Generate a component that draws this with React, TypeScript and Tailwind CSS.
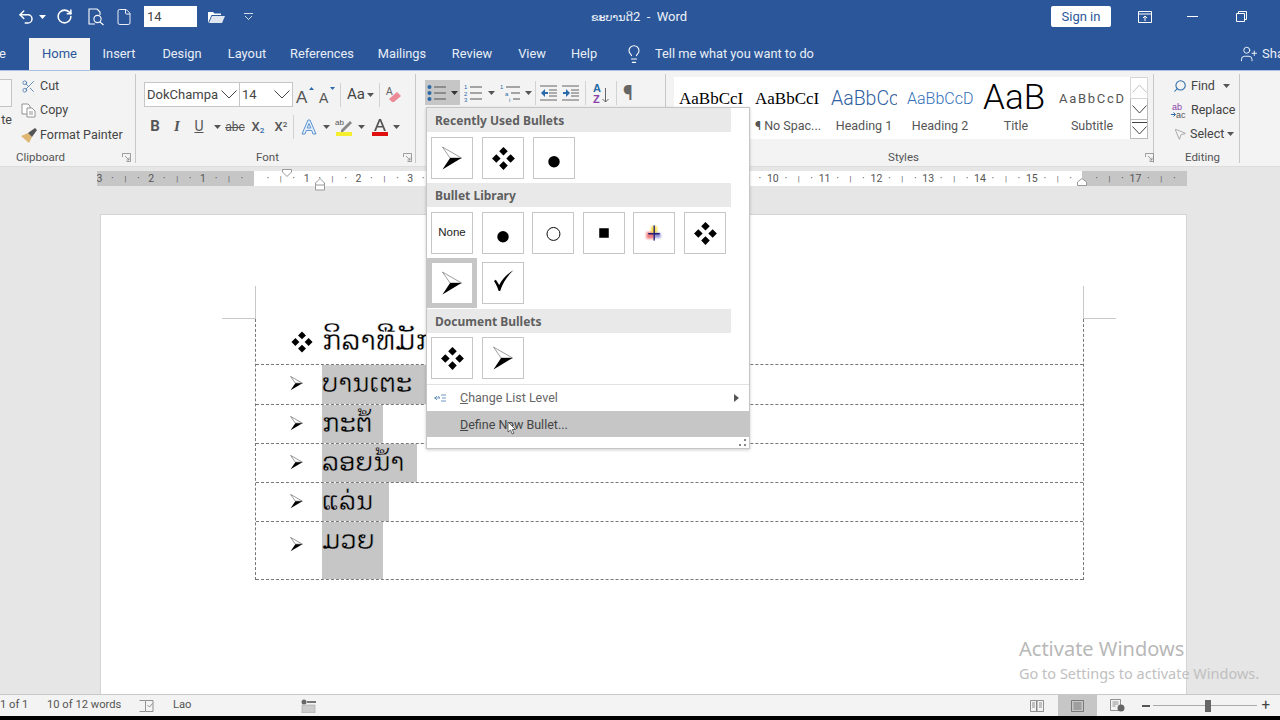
import React from "react";
import { Undo2, RotateCw, File, Scissors, Lightbulb, UserPlus, Search, MousePointer2 } from "lucide-react";

const Arrow = ({ s = 42, crop = false }: { s?: number; crop?: boolean }) => (
  <svg width={s} height={crop ? s * 1.15 : s} viewBox={crop ? "10 9 22 25" : "0 0 42 42"}>
    <path d="M11 9.500 L31 21 L19 21 Z" fill="#fff" stroke="#555" strokeWidth={crop ? 1 : 0.6} />
    <path d="M11 33 L19 21 L31 21 Z" fill="#000" />
  </svg>
);
const Diamonds = ({ s = 42, crop = false }: { s?: number; crop?: boolean }) => (
  <svg width={s} height={s} viewBox={crop ? "9 9 25 25" : "0 0 42 42"} fill="#000">
    <path d="M21.500 9.500l4.500 4.500-4.500 4.500-4.500-4.500z" />
    <path d="M14 17l4.500 4.500-4.500 4.500-4.500-4.500z" />
    <path d="M29 17l4.500 4.500-4.500 4.500-4.500-4.500z" />
    <path d="M21.500 24.500l4.500 4.500-4.500 4.500-4.500-4.500z" />
  </svg>
);
const Dot = () => (
  <svg width="42" height="42" viewBox="0 0 42 42"><circle cx="21" cy="25" r="6" fill="#000" /></svg>
);
const Ring = () => (
  <svg width="42" height="42" viewBox="0 0 42 42"><circle cx="21.500" cy="22" r="6.800" fill="#fff" stroke="#000" strokeWidth="1" /></svg>
);
const Square = () => (
  <svg width="42" height="42" viewBox="0 0 42 42"><rect x="16" y="16" width="10" height="10" fill="#000" /></svg>
);
const Plus4 = () => (
  <svg width="42" height="42" viewBox="0 0 42 42">
    <g className="blur-[1px]">
      <rect x="13" y="20" width="8" height="7" fill="#f07a7a" />
      <rect x="18" y="14" width="6" height="7" fill="#f7d83a" />
      <rect x="21" y="21" width="7" height="5" fill="#8f8fd8" />
    </g>
    <rect x="20.500" y="13" width="1.400" height="16" fill="#20207a" />
    <rect x="15" y="21" width="12" height="1.600" fill="#20207a" />
  </svg>
);
const Check = () => (
  <svg width="42" height="42" viewBox="0 0 42 42"><path d="M11.500 19L13.500 17.500 17 23C20.500 16 26 11 32 7.500 26 13 21 20 18 29.500H16.500C15 25 13.500 22 11.500 19z" fill="#000" /></svg>
);
const Caret = ({ c = "#555" }: { c?: string }) => (
  <svg width="7" height="4" viewBox="0 0 7 4"><path d="M0 0h7L3.500 4z" fill={c} /></svg>
);
const WideChevron = () => (
  <svg width="16" height="9" viewBox="0 0 16 9" fill="none" stroke="#444" strokeWidth="1"><path d="M.5.500L8 8l7.500-7.500" /></svg>
);
const ScrollChevron = ({ c = "#444", up = false }: { c?: string; up?: boolean }) => (
  <svg width="15" height="9" viewBox="0 0 15 9" fill="none" stroke={c} strokeWidth="1"><path d={up ? "M.5 8.500L7.500 1l7 7.500" : "M.5.500L7.500 8l7-7.500"} /></svg>
);

const BulletsIcon = () => (
  <svg width="20" height="18" viewBox="0 0 20 18">
    <g fill="#2b6aa8"><circle cx="2.500" cy="3" r="2" /><circle cx="2.500" cy="9" r="2" /><circle cx="2.500" cy="15" r="2" /></g>
    <g stroke="#555" strokeWidth="1"><path d="M7 3h12M7 9h12M7 15h12" /></g>
  </svg>
);
const NumIcon = () => (
  <svg width="18" height="20" viewBox="0 0 18 20">
    <g fontSize="6" fill="#2b6aa8" fontFamily="Liberation Sans"><text x="0" y="6">1</text><text x="0" y="12.500">2</text><text x="0" y="19">3</text></g>
    <g stroke="#555" strokeWidth="1"><path d="M6 4h12M6 10h12M6 16h12" /></g>
  </svg>
);
const MultiIcon = () => (
  <svg width="20" height="20" viewBox="0 0 20 20">
    <g fontSize="6" fill="#2b6aa8" fontFamily="Liberation Sans"><text x="0" y="6">1</text><text x="5" y="12.500">a</text><text x="9" y="19">i</text></g>
    <g stroke="#555" strokeWidth="1"><path d="M6 4h14M11 10h9M13 16h7" /></g>
  </svg>
);
const IndentIcon = ({ flip = false }: { flip?: boolean }) => (
  <svg width="18" height="18" viewBox="0 0 18 18">
    <g stroke="#666" strokeWidth="1"><path d="M0 2h17M9 6h8M9 9h8M9 12h8M0 16h17" /></g>
    <path d={flip ? "M1 8h3V5l4 4-4 4v-3H1z" : "M8 8H5V5L1 9l4 4v-3h3z"} fill="#2b6aa8" />
  </svg>
);
const SortIcon = () => (
  <svg width="17" height="22" viewBox="0 0 17 22">
    <text x="0" y="10" fontSize="11" fontWeight="700" fill="#2b6aa8" fontFamily="Liberation Sans">A</text>
    <text x="0" y="21" fontSize="11" fontWeight="700" fill="#8a3fa8" fontFamily="Liberation Sans">Z</text>
    <path d="M12.500 6v14M9.500 17l3 3 3-3" stroke="#666" fill="none" />
  </svg>
);
const CopyIcon = () => (
  <svg width="15" height="15" viewBox="0 0 15 15" fill="#fff" stroke="#888" strokeWidth="0.9">
    <path d="M1 1h6l2 2v8H1z" /><path d="M6 5h5l3 3v6H6z" /><path d="M8 9h4M8 11h4" />
  </svg>
);
const PainterIcon = () => (
  <svg width="17" height="15" viewBox="0 0 17 15">
    <path d="M0 8l7-3 4 4-3 6z" fill="#e0b673" />
    <path d="M7 5l4 4 5-7-2-2z" fill="#555" />
  </svg>
);
const PreviewIcon = () => (
  <svg width="18" height="18" viewBox="0 0 18 18" fill="none" stroke="#fff" strokeWidth="1.100">
    <path d="M10 1H2v15h6M10 1l3 3v3" /><circle cx="10.500" cy="11" r="3.600" /><path d="M13 14l3.500 3" />
  </svg>
);
const FolderIcon = () => (
  <svg width="17" height="14" viewBox="0 0 17 14">
    <path d="M0 2h5l1.500 1.500H13V5H3.500L0 13z" fill="#fff" /><path d="M4 6h13l-3 7H1z" fill="#fff" opacity=".85" />
  </svg>
);
const QatCaret = () => (
  <svg width="9" height="7" viewBox="0 0 9 7" fill="none" stroke="#fff" strokeWidth="0.8"><path d="M0 .5h9M1 3l3.500 3.500L8 3" /></svg>
);
const Launcher = () => (
  <svg width="9" height="9" viewBox="0 0 9 9" fill="none" stroke="#888" strokeWidth="0.8"><path d="M.5 4V.5H8.500V8.500H4.500M3 3l4 4M7 4.500V7H4.500" /></svg>
);
const GradA = () => (
  <svg width="16" height="16" viewBox="0 0 16 16"><path d="M1 15L7 1h2l6 14h-3l-1.300-3.500H5.300L4 15zM6.200 9h3.600L8 4.500z" fill="#e3eef9" stroke="#5b93d3" strokeWidth="1" /></svg>
);
const Highlight = () => (
  <svg width="18" height="18" viewBox="0 0 18 18">
    <text x="0" y="7" fontSize="8" fill="#555" fontFamily="Liberation Sans">ab</text>
    <path d="M6 12l9-9 2 2-9 9H6z" fill="#888" />
    <rect x="1" y="14" width="16" height="4" fill="#f5ee2f" />
  </svg>
);
const ColorA = () => (
  <svg width="18" height="18" viewBox="0 0 18 18">
    <path d="M3 13L8 1h2l5 12h-2l-1.300-3.500H6.300L5 13zM7 8h4L9 3z" fill="#555" />
    <rect x="1" y="14" width="16" height="4" fill="#e01010" />
  </svg>
);
const GrowA = ({ s, up }: { s: number; up: boolean }) => (
  <svg width="20" height="20" viewBox="0 0 20 20">
    <text x={up ? 1 : 3} y="18" fontSize={s} fill="#555" fontFamily="Liberation Sans">A</text>
    <path d={up ? "M14 5l2.500-3 2.500 3z" : "M14 2h5l-2.500 3z"} fill="#2b6aa8" />
  </svg>
);
const Eraser = () => (
  <svg width="18" height="18" viewBox="0 0 18 18">
    <text x="1" y="9" fontSize="10" fill="#666" fontFamily="Liberation Sans">A</text>
    <path d="M4 13l8-7 4 4-7 6H7z" fill="#ec8a97" />
  </svg>
);
const ReplaceIcon = () => (
  <svg width="17" height="17" viewBox="0 0 17 17">
    <text x="1" y="7.500" fontSize="9" fill="#8a3fa8" fontFamily="Liberation Sans">ab</text>
    <text x="5" y="15.500" fontSize="9" fill="#555" fontFamily="Liberation Sans">ac</text>
    <path d="M0 12.500h4M2.500 10.500l2 2-2 2" stroke="#2b6aa8" fill="none" />
  </svg>
);

const Sep = () => <div className="w-px h-[24px] bg-[#d2d2d2]" />;
const GroupLabel = ({ children, launcher }: { children: React.ReactNode; launcher?: string }) => (
  <div className="relative h-[18px] shrink-0 flex items-center justify-center text-[11.500px] text-[#555]">
    {children}
    {launcher && <span className={`absolute top-[4px] ${launcher}`}><Launcher /></span>}
  </div>
);

const Tab = ({ w, label }: { w: string; label: string }) => (
  <div className={`${w} text-center text-[12.800px] text-[#e9eef6]`}>{label}</div>
);

const RulerCells = () => {
  const nums = ["3", "2", "1", "", "1", "2", "3", "4", "5", "6", "7", "8", "9", "10", "11", "12", "13", "14", "15", "", "17"];
  return (
    <div className="flex -ml-[4px]">
      {nums.map((n, i) => (
        <div key={i} className="w-[51.800px] shrink-0 flex text-[10.500px] text-[#555] leading-[15px]">
          <span className="w-[13px] text-center">{n}</span>
          <span className="w-[13px] text-center">·</span>
          <span className="w-[13px] text-center text-[8px]">|</span>
          <span className="w-[13px] text-center">·</span>
        </div>
      ))}
    </div>
  );
};

const Cell = ({ children }: { children: React.ReactNode }) => (
  <div className="w-[42px] h-[42px] border border-[#c6c6c6] bg-white flex items-center justify-center shrink-0 overflow-hidden">{children}</div>
);
const MenuHead = ({ children }: { children: React.ReactNode }) => (
  <div className="h-[24px] w-[304px] bg-[#e9e9e9] pl-[8px] pt-[1px] flex items-center text-[12px] font-bold text-[#5f5f5f] font-['Noto_Sans']">{children}</div>
);

const Row = ({ h, text, sel, pt }: { h: string; text: string; sel: string; pt: string }) => (
  <div className={`${h} flex border-b border-dashed border-[#777]`}>
    <div className="w-[33px]" />
    <div className={`w-[15px] flex justify-center ${pt}`}>
      <span className="block"><Arrow s={13} crop /></span>
    </div>
    <div className="w-[18px]" />
    <div className={`${sel} bg-[#c6c6c6] whitespace-nowrap text-[26px] leading-[37px] text-black font-['DejaVu_Sans','Noto_Sans',sans-serif] [-webkit-text-stroke:0.5px_#c6c6c6]`}>{text}</div>
  </div>
);

const Style = ({ sample, label, cls }: { sample: string; label: string; cls: string }) => (
  <div className="w-[76px] h-[61px] shrink-0 flex flex-col items-center overflow-hidden">
    <div className={`h-[40px] w-[66px] pt-[3px] flex items-center justify-start whitespace-nowrap overflow-hidden ${cls}`}>{sample}</div>
    <div className="text-[12.500px] text-[#555] whitespace-nowrap">{label}</div>
  </div>
);

export default function App() {
  return (
    <div className="relative w-[1280px] h-[720px] overflow-hidden flex flex-col bg-[#e6e6e6] font-['Roboto','Noto_Sans',sans-serif]">
      {/* Title bar */}
      <div className="h-[38px] bg-[#2b579a] flex items-center shrink-0 text-white pb-[5px]">
        <div className="w-[17px]" />
        <Undo2 size={18} strokeWidth={2} />
        <div className="w-[4px]" />
        <Caret c="#fff" />
        <div className="w-[10px]" />
        <RotateCw size={17} strokeWidth={2.200} />
        <div className="w-[14px]" />
        <PreviewIcon />
        <div className="w-[10px]" />
        <File size={18} strokeWidth={1.200} />
        <div className="w-[11px]" />
        <div className="w-[53px] h-[21px] bg-white text-[#444] text-[13px] leading-[22px] pl-[3px]">14</div>
        <div className="w-[11px]" />
        <FolderIcon />
        <div className="w-[19px]" />
        <QatCaret />
        <div className="w-[338px] shrink-0" />
        <div className="text-[12.500px] whitespace-pre font-['DejaVu_Sans','Noto_Sans',sans-serif] w-[100px] text-[#eef2f8]">
          <span className="text-[11px]">ຂະບານດີ</span><span className="font-['Roboto'] text-[13px]">2  -  Word</span>
        </div>
        <div className="flex-1" />
        <div className="w-[60px] h-[21px] bg-white rounded-[2px] text-[#2b579a] text-[13px] text-center leading-[21px]">Sign in</div>
        <div className="w-[27px]" />
        <svg width="14" height="12" viewBox="0 0 14 12" fill="none" stroke="#fff"><path d="M.5.500h13v11H.5zM.5 3h13" /><path d="M7 10V5M5 7l2-2 2 2" /></svg>
        <div className="w-[35px]" />
        <div className="w-[11px] h-px bg-white" />
        <div className="w-[38px]" />
        <svg width="11" height="11" viewBox="0 0 11 11" fill="none" stroke="#fff"><path d="M.5 2.500h8v8h-8zM2.500 2.500v-2h8v8h-2" /></svg>
        <div className="w-[33px]" />
      </div>
      {/* Tabs */}
      <div className="h-[32px] bg-[#2b579a] flex items-center shrink-0 relative">
        <div className="w-[29px] text-[13px] text-[#e9eef6] shrink-0 overflow-hidden"><span className="block -ml-px">e</span></div>
        <div className="w-[61px] h-[32px] bg-[#f3f3f3] text-[13px] text-[#2b579a] text-center leading-[32px] shrink-0">Home</div>
        <Tab w="w-[58px]" label="Insert" />
        <Tab w="w-[68px]" label="Design" />
        <Tab w="w-[62px]" label="Layout" />
        <Tab w="w-[88px]" label="References" />
        <Tab w="w-[72px]" label="Mailings" />
        <Tab w="w-[68px]" label="Review" />
        <Tab w="w-[52px]" label="View" />
        <Tab w="w-[52px]" label="Help" />
        <Lightbulb size={20} strokeWidth={1.300} className="text-white ml-[14px]" />
        <div className="ml-[11px] text-[12.800px] text-[#e9eef6]">Tell me what you want to do</div>
        <div className="flex-1" />
        <UserPlus size={18} strokeWidth={1.200} className="text-white" />
        <div className="ml-[4px] w-[18px] overflow-hidden text-[13px] text-[#e9eef6]">Share</div>
      </div>
      <div className="h-px bg-[#a9c0e4] shrink-0" />
      {/* Ribbon */}
      <div className="h-[96px] bg-[#f3f3f3] flex shrink-0 border-b border-[#dcdcdc] text-[#444]">
        {/* Clipboard */}
        <div className="w-[136px] shrink-0 border-r border-[#c8c8c8] my-[3px] flex flex-col">
          <div className="h-[75px] shrink-0 flex">
            <div className="w-[21px] relative">
              <div className="w-[12px] h-[28px] mt-[5px] bg-[#f8f8f8] border border-l-0 border-[#c4c4c4]" />
              <div className="text-[12.500px] leading-[16px] mt-[5px] w-[12px] overflow-hidden text-right">te</div>
            </div>
            <div className="flex flex-col gap-[4.500px] pt-[2px] text-[12.500px]">
              <div className="flex items-center gap-[4px] h-[20px]"><Scissors size={15} strokeWidth={1.200} className="text-[#3e6ea8]" />Cut</div>
              <div className="flex items-center gap-[4px] h-[20px]"><CopyIcon />Copy</div>
              <div className="flex items-center gap-[2px] h-[20px]"><PainterIcon />Format Painter</div>
            </div>
          </div>
          <GroupLabel launcher="right-[4px]"><span className="mr-[54px]">Clipboard</span></GroupLabel>
        </div>
        {/* Font */}
        <div className="w-[280px] shrink-0 border-r border-[#c8c8c8] my-[3px] flex flex-col">
          <div className="h-[75px] shrink-0 pl-[8px] pt-[8px]">
            <div className="flex items-center h-[25px]">
              <div className="w-[96px] h-[25px] bg-white border border-[#c6c6c6] flex items-center justify-between pl-[2px] pr-[2px] text-[13px]">DokChampa<WideChevron /></div>
              <div className="w-[53px] h-[25px] bg-white border border-l-0 border-[#c6c6c6] flex items-center justify-between pl-[2px] pr-[2px] text-[13px]">14<WideChevron /></div>
              <div className="ml-[2px] w-[20px]"><GrowA s={17} up /></div>
              <div className="w-[22px] ml-[1px]"><GrowA s={14} up={false} /></div>
              <div className="ml-[2px]"><Sep /></div>
              <div className="ml-[6px] w-[28px] text-[15px] flex items-center gap-[2px]">Aa<Caret /></div>
              <div className="ml-[4px]"><Sep /></div>
              <div className="ml-[5px]"><Eraser /></div>
            </div>
            <div className="flex items-center h-[25px] mt-[7px] text-[#555]">
              <div className="w-[22px] text-center text-[15px] font-bold">B</div>
              <div className="w-[22px] text-center text-[15px] italic font-['Liberation_Serif'] font-bold">I</div>
              <div className="w-[22px] text-center text-[14px] underline">U</div>
              <div className="w-[14px] flex justify-center"><Caret /></div>
              <div className="w-[22px] text-center text-[12px] line-through">abc</div>
              <div className="w-[24px] text-center text-[13px] font-medium">X<sub className="text-[8px] text-[#2b6aa8]">2</sub></div>
              <div className="w-[22px] text-center text-[13px] font-medium">X<sup className="text-[8px]">2</sup></div>
              <div className="ml-[1px]"><Sep /></div>
              <div className="ml-[7px]"><GradA /></div>
              <div className="ml-[6px]"><Caret /></div>
              <div className="ml-[5px]"><Highlight /></div>
              <div className="ml-[5px]"><Caret /></div>
              <div className="ml-[6px]"><ColorA /></div>
              <div className="ml-[4px]"><Caret /></div>
            </div>
          </div>
          <GroupLabel launcher="right-[3px]"><span className="mr-[16px]">Font</span></GroupLabel>
        </div>
        {/* Paragraph */}
        <div className="w-[250px] shrink-0 border-r border-[#c8c8c8] my-[3px] flex flex-col">
          <div className="h-[73px] pl-[9px] pt-[6px]">
            <div className="flex items-center h-[25px]">
              <div className="w-[35px] h-[25px] bg-[#c6c6c6] flex items-center gap-[4px] pl-[2px]"><BulletsIcon /><Caret c="#333" /></div>
              <div className="ml-[4px] w-[33px] flex items-center gap-[6px]"><NumIcon /><Caret /></div>
              <div className="ml-[3px] w-[35px] flex items-center gap-[5px]"><MultiIcon /><Caret /></div>
              <Sep />
              <div className="ml-[4px]"><IndentIcon /></div>
              <div className="ml-[4px]"><IndentIcon flip /></div>
              <div className="ml-[5px]"><Sep /></div>
              <div className="ml-[7px]"><SortIcon /></div>
              <div className="ml-[6px]"><Sep /></div>
              <div className="ml-[6px] text-[20px] leading-[24px] font-medium text-[#666]">¶</div>
            </div>
          </div>
        </div>
        {/* Styles */}
        <div className="w-[488px] shrink-0 border-r border-[#c8c8c8] my-[3px] flex flex-col">
          <div className="h-[75px] shrink-0 pl-[8px] pt-[3px]">
            <div className="flex w-[474px] h-[62px] bg-white">
              <Style sample="AaBbCcI" label="Normal" cls="font-['Liberation_Serif'] text-[17px] text-black" />
              <Style sample="AaBbCcI" label="¶ No Spac..." cls="font-['Liberation_Serif'] text-[17px] text-black" />
              <Style sample="AaBbCcC" label="Heading 1" cls="text-[19.500px] font-light text-[#2f5f9f]" />
              <Style sample="AaBbCcD" label="Heading 2" cls="text-[16px] font-light text-[#2f6fb8]" />
              <Style sample="AaB" label="Title" cls="text-[35px] font-light text-black" />
              <Style sample="AaBbCcD" label="Subtitle" cls="text-[13px] tracking-[1.700px] text-[#555]" />
              <div className="w-[18px] flex flex-col">
                <div className="h-[22px] border border-[#d6d6d6] flex items-center justify-center"><ScrollChevron c="#c2c2c2" up /></div>
                <div className="h-[20px] border-x border-[#bbb] flex items-center justify-center"><ScrollChevron /></div>
                <div className="h-[20px] border border-[#bbb] flex flex-col items-center"><div className="w-[15px] h-px bg-[#444] mt-[2px]" /><div className="mt-[3px] flex"><ScrollChevron /></div></div>
              </div>
            </div>
          </div>
          <GroupLabel launcher="-right-[1px]"><span className="mr-[12px]">Styles</span></GroupLabel>
        </div>
        {/* Editing */}
        <div className="w-[86px] shrink-0 border-r border-[#c8c8c8] my-[3px] flex flex-col">
          <div className="h-[75px] shrink-0 pl-[19px] text-[12.500px]">
            <div className="h-[24px] flex items-center gap-[4px]"><Search size={14} strokeWidth={1.800} className="text-[#2b6aa8] -scale-x-100" />Find<span className="ml-[4px]"><Caret /></span></div>
            <div className="h-[24px] flex items-center gap-[3px] -ml-[2px]"><ReplaceIcon />Replace</div>
            <div className="h-[24px] flex items-center gap-[3px]"><MousePointer2 size={14} strokeWidth={1} className="text-[#777]" />Select<Caret /></div>
          </div>
          <GroupLabel><span className="ml-[12px]">Editing</span></GroupLabel>
        </div>
      </div>
      {/* Ruler */}
      <div className="h-[22px] shrink-0 bg-[#e6e6e6] pl-[97px] pt-[4px] relative">
        <div className="w-[1090px] h-[15px] overflow-hidden bg-[linear-gradient(to_right,#c6c6c6_157px,#fff_157px,#fff_985px,#c6c6c6_985px)]">
          <RulerCells />
        </div>
        <svg className="absolute left-[282px] top-[2px]" width="10" height="8" viewBox="0 0 10 8"><path d="M.5.500h9V3L5 7.500.5 3z" fill="#fff" stroke="#999" /></svg>
        <svg className="absolute left-[315px] top-[11px]" width="10" height="13" viewBox="0 0 10 13"><path d="M.5 5L5 .5 9.500 5v7H.5zM.5 7h9" fill="#fff" stroke="#999" /></svg>
        <svg className="absolute left-[1077px] top-[11px]" width="10" height="8" viewBox="0 0 10 8"><path d="M.5 4L5 .5 9.500 4v3.500H.5z" fill="#fff" stroke="#999" /></svg>
      </div>
      {/* Document */}
      <div className="flex-1 min-h-0 relative overflow-hidden pl-[100px] pt-[25px]">
        <div className="w-[1087px] h-full bg-white border-l border-r border-t border-[#d4d4d4] pt-[71px] pl-[121px]">
          <div className="flex h-[33px]">
            <div className="w-[33px] border-b border-[#c8c8c8]" />
            <div className="w-[829px] border-x border-[#c8c8c8]" />
            <div className="w-[32px] border-b border-[#c8c8c8]" />
          </div>
          <div className="ml-[33px] w-[829px] border-x border-dashed border-[#777]">
            <div className="h-[46px] flex border-b border-dashed border-[#777]">
              <div className="w-[35px]" />
              <div className="w-[22px] pt-[12px]"><span className="block"><Diamonds s={22} crop /></span></div>
              <div className="w-[9px]" />
              <div className="text-[29px] leading-[42px] text-black whitespace-nowrap font-['DejaVu_Sans','Noto_Sans',sans-serif] [-webkit-text-stroke:0.5px_#fff]">ກິລາທີ່ມັກ</div>
            </div>
            <Row h="h-[40px]" text="ບານເຕະ" sel="w-[200px]" pt="pt-[11px]" />
            <Row h="h-[39px]" text="ກະຕໍ້" sel="w-[61px]" pt="pt-[11px]" />
            <Row h="h-[39px]" text="ລອຍນ້ຳ" sel="w-[95px]" pt="pt-[11px]" />
            <Row h="h-[39px]" text="ແລ່ນ" sel="w-[67px]" pt="pt-[11px]" />
            <Row h="h-[58px]" text="ມວຍ" sel="w-[61px]" pt="pt-[15px]" />
          </div>
        </div>
        <div className="absolute left-[1019px] top-[447px] text-[20px] leading-[26px] text-[#b8b8b8] whitespace-nowrap font-['Noto_Sans']">Activate Windows</div>
        <div className="absolute left-[1019px] top-[474px] text-[14.500px] leading-[20px] text-[#c0c0c0] whitespace-nowrap font-['Noto_Sans']">Go to Settings to activate Windows.</div>
      </div>
      {/* Status */}
      <div className="h-[22px] shrink-0 bg-[#f3f3f3] border-t border-[#c8c8c8] flex items-center text-[11.200px] text-[#555]">
        <div className="w-[47px]">1 of 1</div>
        <div className="w-[92px]">10 of 12 words</div>
        <svg width="15" height="12" viewBox="0 0 15 12" fill="none" stroke="#777" strokeWidth=".8"><path d="M.5.500h6v11h-6M7 .5h7v11H7M8.500 5l2 2 3-3.500" /></svg>
        <div className="ml-[19px] w-[128px]">Lao</div>
        <svg width="15" height="14" viewBox="0 0 15 14"><circle cx="3" cy="3" r="2.500" fill="#666" /><rect x="6" y="2" width="9" height="2" fill="#777" /><rect x="1" y="6" width="13" height="8" fill="#ccc" stroke="#999" strokeWidth=".5" /></svg>
        <div className="flex-1" />
        <svg width="14" height="12" viewBox="0 0 14 12" fill="none" stroke="#777" strokeWidth=".8"><path d="M.5.500h6v11h-6zM7 .5h6.500v11H7zM2 3h3M2 5h3M2 7h3M9 3h3M9 5h3M9 7h3" /></svg>
        <div className="ml-[14px] w-[39px] h-full bg-[#c6c6c6] flex items-center justify-center">
          <svg width="13" height="12" viewBox="0 0 13 12" fill="none" stroke="#666" strokeWidth=".8"><path d="M.5.500h12v11H.5zM2.500 3h8M2.500 5h8M2.500 7h8M2.500 9h8" /></svg>
        </div>
        <div className="ml-[13px]">
          <svg width="15" height="13" viewBox="0 0 15 13" fill="none" stroke="#777" strokeWidth=".8"><path d="M.5.500h10v11H.5zM2.500 3h6M2.500 5h6M2.500 7h3" /><circle cx="11" cy="9" r="3.500" fill="#666" stroke="none" /></svg>
        </div>
        <div className="ml-[17px] w-[8px] h-[2px] bg-[#555]" />
        <div className="ml-[3px] w-[104px] h-[12px] flex items-center relative">
          <div className="w-full h-px bg-[#aaa]" />
          <div className="absolute left-[52px] w-[6px] h-[12px] bg-[#666]" />
        </div>
        <div className="ml-[4px] text-[15px] leading-[15px] text-[#444]">+</div>
        <div className="w-[10px]" />
      </div>
      <div className="h-[4px] bg-black shrink-0" />
      {/* Menu */}
      <div className="absolute left-[426px] top-[107px] w-[324px] h-[342px] bg-white border border-[#c6c6c6] shadow-[0_1px_3px_rgba(0,0,0,0.2)] flex flex-col">
        <MenuHead>Recently Used Bullets</MenuHead>
        <div className="flex gap-[9px] pl-[4px] pt-[5px] h-[51px]"><Cell><Arrow /></Cell><Cell><Diamonds /></Cell><Cell><Dot /></Cell></div>
        <MenuHead>Bullet Library</MenuHead>
        <div className="flex gap-[8.500px] pl-[4px] pt-[5px] h-[51px]">
          <Cell><span className="text-[11.500px] text-[#222] font-['Liberation_Sans']">None</span></Cell>
          <Cell><Dot /></Cell><Cell><Ring /></Cell><Cell><Square /></Cell><Cell><Plus4 /></Cell><Cell><Diamonds /></Cell>
        </div>
        <div className="flex items-start h-[51px]">
          <div className="w-[50px] h-[50px] bg-[#c6c6c6] flex items-center justify-center"><Cell><Arrow /></Cell></div>
          <div className="ml-[5px] mt-[4px]"><Cell><Check /></Cell></div>
        </div>
        <MenuHead>Document Bullets</MenuHead>
        <div className="flex gap-[9px] pl-[4px] pt-[4px] h-[50px]"><Cell><Diamonds /></Cell><Cell><Arrow /></Cell></div>
        <div className="h-px bg-[#e2e2e2] mt-[1px]" />
        <div className="h-[26px] flex items-center text-[12.500px] text-[#666] relative">
          <svg className="ml-[7px]" width="12" height="8" viewBox="0 0 12 8"><path d="M0 4h6M3 2L1 4l2 2M6 4L4 2M7 1h5M8 4h4M7 7h5" stroke="#4a7fb0" fill="none" strokeWidth=".8" /></svg>
          <span className="ml-[14px]"><u>C</u>hange List Level</span>
          <svg className="absolute right-[10px]" width="5" height="8" viewBox="0 0 5 8"><path d="M0 0l5 4-5 4z" fill="#555" /></svg>
        </div>
        <div className="h-[26px] bg-[#c6c6c6] flex items-center text-[12.500px] text-[#444] pl-[33px] pt-[2px]"><span><u>D</u>efine New Bullet...</span></div>
        <div className="flex-1 relative">
          <svg className="absolute right-[3px] bottom-[2px]" width="7" height="7" viewBox="0 0 7 7" fill="#888"><rect x="5" y="0" width="2" height="2" /><rect x="0" y="5" width="2" height="2" /><rect x="5" y="5" width="2" height="2" /></svg>
        </div>
      </div>
      <svg className="absolute left-[507px] top-[421px]" width="11" height="14" viewBox="0 0 11 14"><path d="M1 1v10l2.500-2 1.800 4 1.700-.8L5.200 8.500H8.500z" fill="#fff" stroke="#333" strokeWidth=".7" /></svg>
    </div>
  );
}
